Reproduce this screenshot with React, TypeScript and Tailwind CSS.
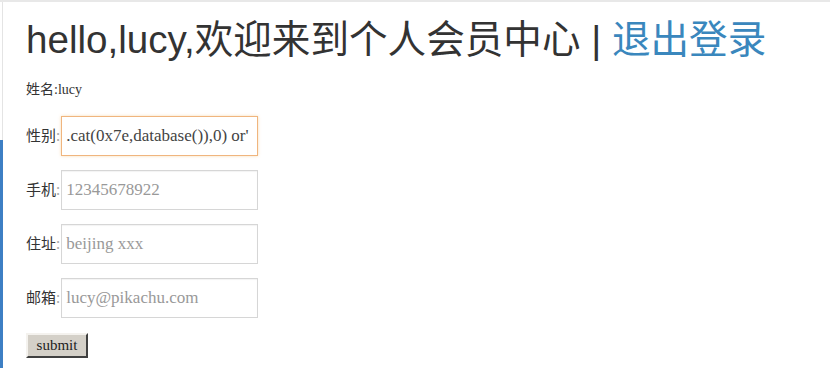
import React from "react";

const serif = { fontFamily: '"Liberation Serif", "Noto Sans CJK SC", serif' };

function Row({ label, value, focused }: { label: string; value: string; focused?: boolean }) {
  return (
    <div className="flex items-center h-[40px]">
      <span className="text-[15px] text-[#333]" style={{ fontFamily: '"Noto Sans CJK SC", sans-serif' }}>
        {label}
        <span className="text-[#aaa]">:</span>
      </span>
      <div
        className={
          "ml-[1px] w-[197px] h-[40px] flex items-center px-[4px] bg-white border overflow-hidden whitespace-nowrap text-[17px] " +
          (focused ? "border-[#f0b57e] text-[#444]" : "border-[#d6d6d6] text-[#999]")
        }
        style={{ ...serif, boxShadow: focused ? "0 0 3px rgba(240,173,78,0.4)" : "inset 0 1px 1px rgba(0,0,0,0.05)" }}
      >
        {value}
      </div>
    </div>
  );
}

export default function App() {
  return (
    <div className="relative w-[830px] h-[368px] bg-white overflow-hidden border-t-2 border-[#e8e8e8]">
      <div className="absolute left-0 top-[138px] w-[3px] h-[240px] bg-[#3d7fc4]" />
      <div className="h-full border-l border-[#e4e4e4] ml-[2px] pl-[23px]">
        <h1
          className="text-[38.6px] leading-none text-[#333] pt-[19px] whitespace-nowrap"
          style={{ fontFamily: '"Liberation Sans", "Noto Sans CJK SC", sans-serif' }}
        >
          hello,lucy,欢迎来到个人会员中心 | <span className="text-[#3a87bd]">退出登录</span>
        </h1>
        <div className="mt-[21px] text-[14px] text-[#333] h-[18px] flex items-center" style={serif}>
          姓名:lucy
        </div>
        <div className="mt-[17px] flex flex-col gap-[14px]">
          <Row label="性别" value=".cat(0x7e,database()),0) or'" focused />
          <Row label="手机" value="12345678922" />
          <Row label="住址" value="beijing xxx" />
          <Row label="邮箱" value="lucy@pikachu.com" />
        </div>
        <button
          className="mt-[15px] w-[62px] h-[25px] text-[15px] leading-none text-[#222] bg-[#d4d0c8] border-2 border-solid border-t-[#f4f2ee] border-l-[#f4f2ee] border-r-[#404040] border-b-[#404040]"
          style={serif}
        >
          submit
        </button>
      </div>
    </div>
  );
}
